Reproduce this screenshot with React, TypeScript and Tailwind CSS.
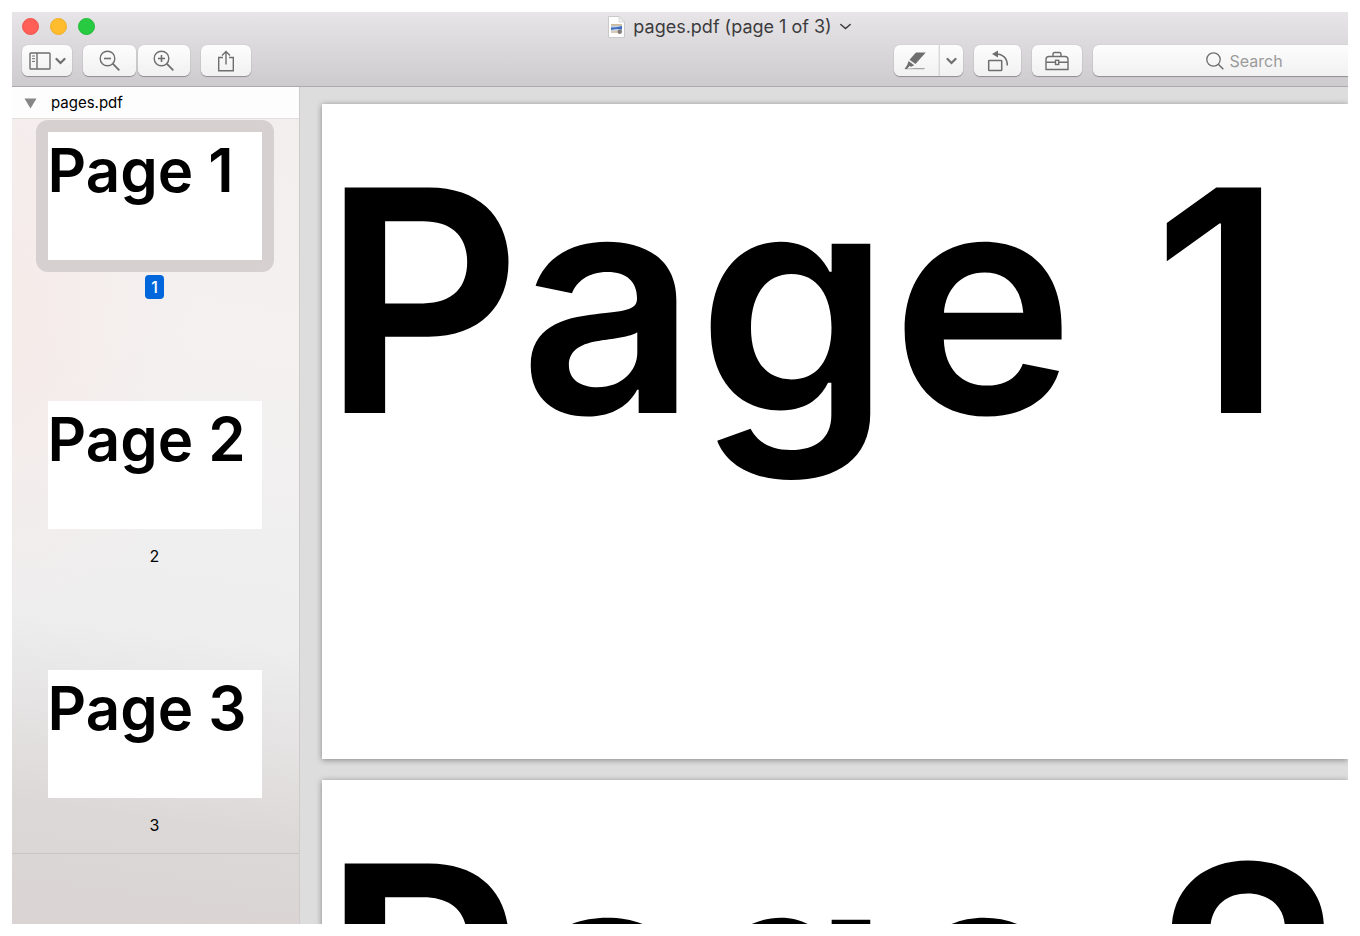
import { useState } from "react";
import type { ReactNode } from "react";

const pages = [1, 2, 3];

const buttonStyle =
  "flex h-[31px] items-center justify-center bg-linear-to-b from-[#fdfdfd] to-[#f1f1f1] text-[#6e6e6e] shadow-[0_1px_1px_rgba(0,0,0,0.3),0_0_1px_rgba(0,0,0,0.25)]";

interface ToolButtonProps {
  label: string;
  className: string;
  children: ReactNode;
}

function ToolButton({ label, className, children }: ToolButtonProps) {
  return (
    <button type="button" aria-label={label} className={`${buttonStyle} ${className}`}>
      {children}
    </button>
  );
}

function Chevron({ thin }: { thin?: boolean }) {
  return (
    <svg width="11" height="8" viewBox="0 0 11 8" fill="none" stroke="currentColor" strokeWidth={thin ? 1.5 : 2.2}>
      <path d={thin ? "M.8 1.5l4.700 4 4.700-4" : "M1.500 2l4 4 4-4"} strokeLinecap="round" />
    </svg>
  );
}

function SidebarIcon() {
  return (
    <svg width="22" height="18" viewBox="0 0 22 18" fill="none" stroke="currentColor" strokeWidth="1.4">
      <rect x="1" y="1" width="20" height="16" rx="0.8" />
      <path d="M8 1v16" />
      <path d="M3 4h3M3 6.7h3M3 9.4h3" strokeWidth="1" />
    </svg>
  );
}

function ZoomIcon({ plus }: { plus?: boolean }) {
  return (
    <svg width="22" height="22" viewBox="0 0 22 22" fill="none" stroke="currentColor" strokeWidth="1.4">
      <circle cx="8.5" cy="8.5" r="7.3" />
      <path d="M5 8.5h7" strokeWidth="1.6" />
      {plus && <path d="M8.5 5v7" strokeWidth="1.6" />}
      <path d="M13.700 13.700l6.600 6.600" strokeWidth="1.8" />
    </svg>
  );
}

function ShareIcon() {
  return (
    <svg width="18" height="22" viewBox="0 0 18 22" fill="none" stroke="currentColor" strokeWidth="1.4">
      <path d="M6 7.5H1.700v13.300h14.600V7.5H12" />
      <path d="M9 14.500V1.500M5 5.500l4-4 4 4" />
    </svg>
  );
}

function MarkupIcon() {
  return (
    <svg width="22" height="18" viewBox="0 0 22 18" fill="currentColor">
      <path d="M12 .5h9.700L11.500 12 5.500 7.700z" />
      <path d="M4.600 8.900l5.600 4.300-3 1.500-1.700-.7-2.500 3H.6L3.200 13z" />
      <path d="M1 16.700L12 16h9l-1 1.200H1z" opacity="0.6" />
    </svg>
  );
}

function RotateIcon() {
  return (
    <svg width="22" height="22" viewBox="0 0 22 22" fill="none" stroke="currentColor" strokeWidth="1.5">
      <rect x="1.700" y="10.500" width="13" height="10" rx="0.6" />
      <path d="M9 4c7 0 11.500 4.500 11.300 11.500" />
      <path d="M11 .5v7L5 4z" fill="currentColor" stroke="none" />
    </svg>
  );
}

function ToolboxIcon() {
  return (
    <svg width="24" height="20" viewBox="0 0 24 20" fill="none" stroke="currentColor" strokeWidth="1.4">
      <path d="M1 18.500V8.500Q1 5.500 4 5.500H20Q23 5.500 23 8.500V18.500z" />
      <path d="M8 5.500V3Q8 1.500 9.500 1.500H14.500Q16 1.500 16 3V5.500" />
      <path d="M1 11.300h9.500M14 11.300h9" />
      <rect x="10.500" y="9.300" width="3.200" height="4.200" />
    </svg>
  );
}

function SearchIcon() {
  return (
    <svg width="18" height="18" viewBox="0 0 18 18" fill="none" stroke="#6e6e6e" strokeWidth="1.3">
      <circle cx="7.500" cy="7.500" r="6.700" />
      <path d="M12.300 12.300l5 5" strokeWidth="1.6" />
    </svg>
  );
}

function DocumentIcon() {
  return (
    <svg width="17" height="22" viewBox="0 0 17 22">
      <path d="M.5.500h10.500l5.500 5.500v15.500H.5z" fill="#fff" stroke="#c9c9cb" />
      <path d="M11 .5v5.500h5.500z" fill="#f1f1f1" stroke="#cfcfd1" strokeWidth="0.8" />
      <rect x="3" y="8" width="11" height="9" fill="#c3d3ec" />
      <path d="M3 8h11v1.800H3z" fill="#cdbf9e" />
      <path d="M3 11.500q5 0 11-1.500v3.500q-6-1-11 .5z" fill="#3f6cc0" />
      <path d="M3 15q4-1 8 0v2H3z" fill="#d8cbb9" />
      <circle cx="11.700" cy="15.800" r="2.200" fill="#857b76" />
    </svg>
  );
}

function Toolbar() {
  return (
    <header className="flex h-[75px] shrink-0 flex-col border-b border-[#ababab] bg-linear-to-b from-[#e7e5e8] to-[#cdcbcd]">
      <div className="flex h-[29px] items-center pl-[10px]">
        <div className="flex gap-[11px]">
          <button type="button" aria-label="Close" className="size-[17px] rounded-full border border-[#f0544d] bg-[#ff5f57]" />
          <button type="button" aria-label="Minimize" className="size-[17px] rounded-full border border-[#f0ad2b] bg-[#ffbd2e]" />
          <button type="button" aria-label="Full screen" className="size-[17px] rounded-full border border-[#22bb38] bg-[#28ca41]" />
        </div>
        <div className="flex flex-1 items-center justify-center gap-2 pl-4 text-[#3c3b3d]">
          <DocumentIcon />
          <h1 className="text-lg leading-6">pages.pdf (page 1 of 3)</h1>
          <Chevron thin />
        </div>
      </div>
      <div className="flex items-center pt-1 pl-[10px]">
        <ToolButton label="Sidebar view" className="w-[50px] gap-1 rounded-md">
          <SidebarIcon />
          <Chevron />
        </ToolButton>
        <ToolButton label="Zoom out" className="ml-[11px] w-[53px] rounded-md">
          <ZoomIcon />
        </ToolButton>
        <ToolButton label="Zoom in" className="ml-0.5 w-[52px] rounded-md">
          <ZoomIcon plus />
        </ToolButton>
        <ToolButton label="Share" className="ml-[11px] w-[50px] rounded-md">
          <ShareIcon />
        </ToolButton>
        <ToolButton label="Markup" className="ml-auto w-[45px] rounded-l-md pr-1">
          <MarkupIcon />
        </ToolButton>
        <ToolButton label="Markup options" className="w-6 rounded-r-md border-l border-[#d8d8d8]">
          <Chevron />
        </ToolButton>
        <ToolButton label="Rotate" className="ml-[11px] w-[47px] rounded-md">
          <RotateIcon />
        </ToolButton>
        <ToolButton label="Toolbox" className="ml-[11px] w-[50px] rounded-md">
          <ToolboxIcon />
        </ToolButton>
        <label className={`${buttonStyle} ml-[11px] w-[255px] gap-1.5 rounded-l-md pl-[54px]`}>
          <SearchIcon />
          <input
            type="text"
            aria-label="Search"
            placeholder="Search"
            className="w-[60px] bg-transparent text-base outline-none placeholder:text-[#9b9b9b]"
          />
        </label>
      </div>
    </header>
  );
}

interface SidebarProps {
  selected: number;
  onSelect: (page: number) => void;
}

function Sidebar({ selected, onSelect }: SidebarProps) {
  return (
    <aside className="flex w-[288px] shrink-0 flex-col border-r border-[#cfcbcb] bg-[radial-gradient(180px_320px_at_0%_28%,#f5ebe9,transparent),linear-gradient(188deg,#f3eeee_0%,#f4f1f0_30%,#eeeeef_64%,#dcd8d7_86%,#d9d4d3_100%)]">
      <button
        type="button"
        className="flex h-8 shrink-0 items-center gap-[14px] border-b border-[#e2dfdf] bg-[#fdfdfd] pt-0.5 pl-3 text-[15px]"
      >
        <svg width="13" height="11" viewBox="0 0 13 11" fill="#868686">
          <path d="M.5.500h12l-6 10z" />
        </svg>
        pages.pdf
      </button>
      <nav className="flex shrink-0 flex-col items-center gap-[90px] border-b border-[#c9c4c4] pt-px pr-0.5 pb-4">
        {pages.map((page) => (
          <button key={page} type="button" onClick={() => onSelect(page)} className="flex flex-col items-center gap-[3px]">
            <span className={page === selected ? "rounded-xl bg-[#d6d1d0] p-3" : "p-3"}>
              <span className="block h-[128px] w-[214px] bg-white pt-2 text-left text-[60px] leading-none font-semibold whitespace-nowrap">
                Page {page}
              </span>
            </span>
            <span
              className={
                page === selected
                  ? "rounded bg-[#0066dc] px-1.5 text-base font-medium text-white"
                  : "px-1.5 text-base"
              }
            >
              {page}
            </span>
          </button>
        ))}
      </nav>
    </aside>
  );
}

export default function App() {
  const [selected, setSelected] = useState(1);

  return (
    <div className="h-screen bg-white p-3 font-['Inter',sans-serif] text-black">
      <div className="flex h-full flex-col overflow-hidden">
        <Toolbar />
        <div className="flex min-h-0 flex-1">
          <Sidebar selected={selected} onSelect={setSelected} />
          <main className="flex min-w-0 flex-1 flex-col gap-[21px] overflow-hidden bg-[#dddddd] pt-[17px] pl-[22px]">
            {pages.map((page) => (
              <section
                key={page}
                className="h-[655px] shrink-0 bg-white pt-1 shadow-[0_1px_6px_rgba(0,0,0,0.4)]"
              >
                <h2 className="text-[310px] leading-[386px] font-semibold whitespace-nowrap">Page {page}</h2>
              </section>
            ))}
          </main>
        </div>
      </div>
    </div>
  );
}
